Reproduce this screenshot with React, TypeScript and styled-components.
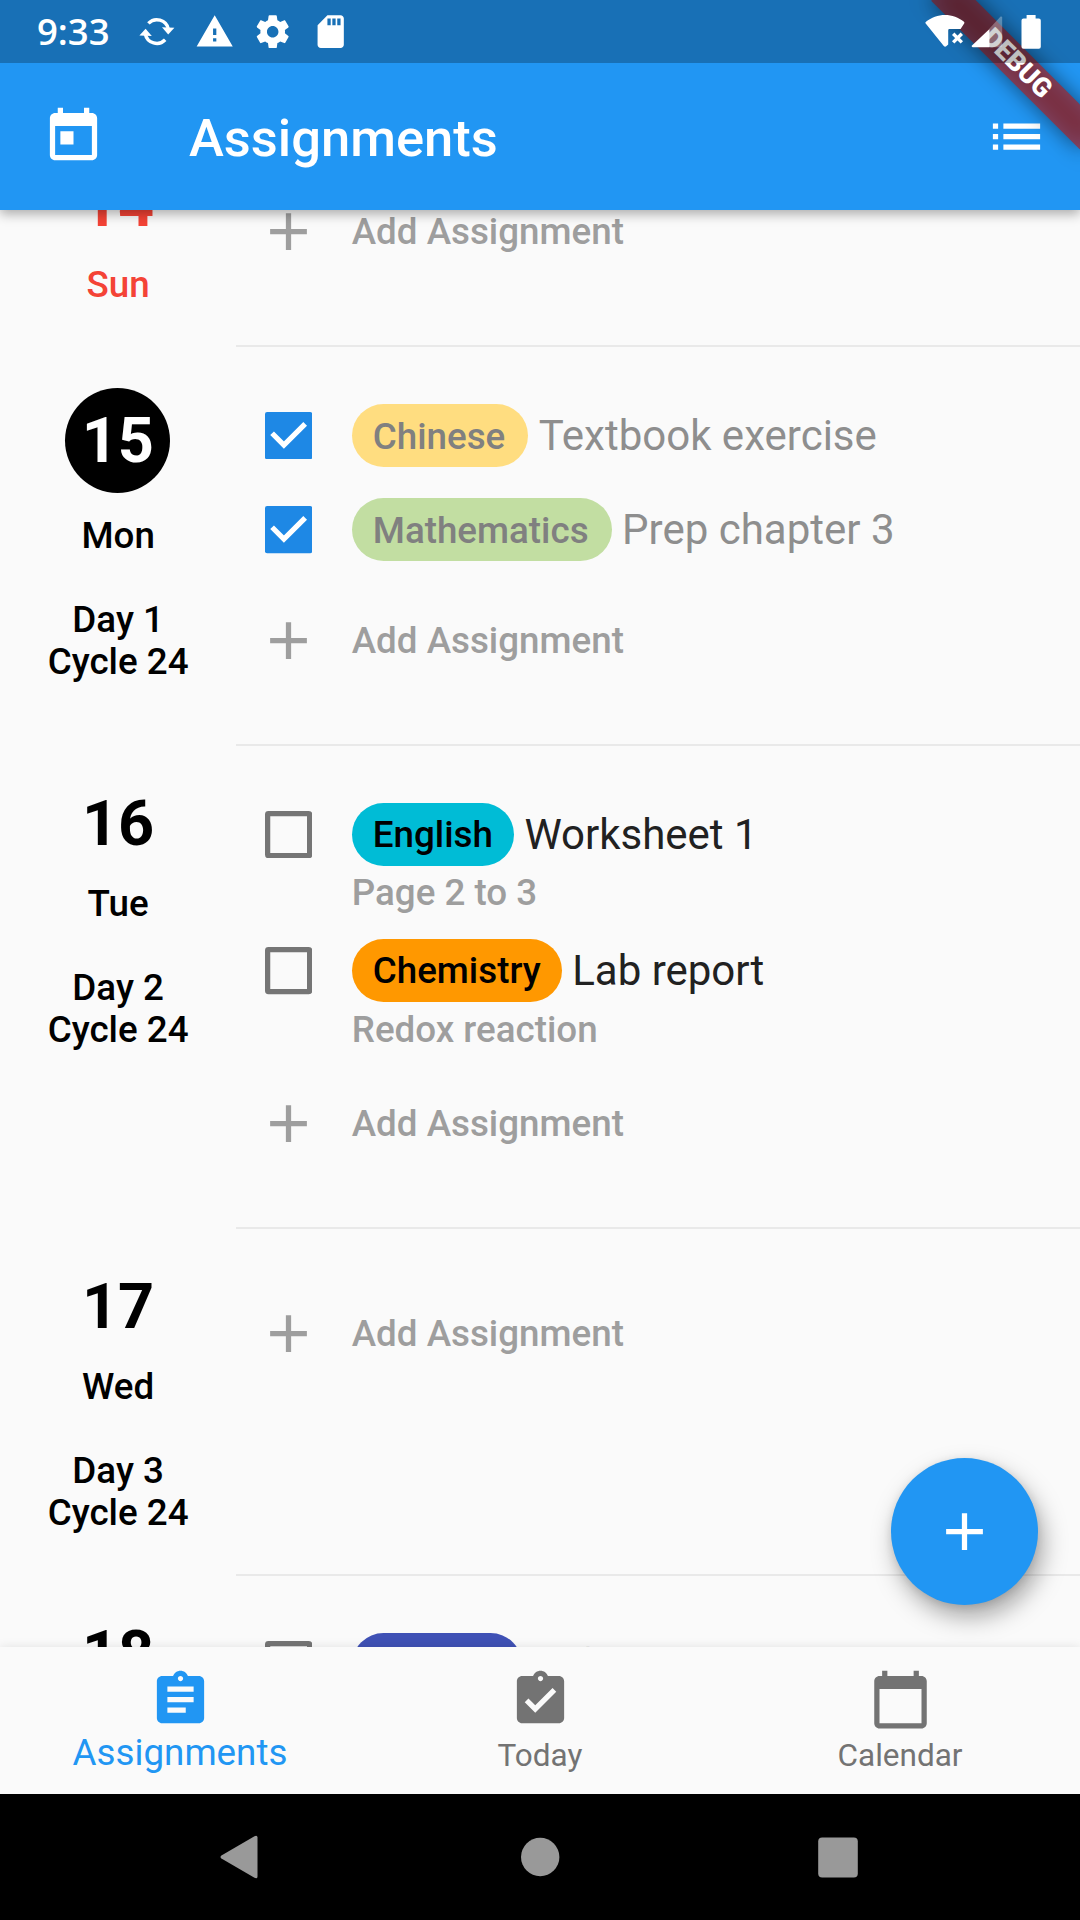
import React from "react";
import styled, { createGlobalStyle, css } from "styled-components";

const GlobalStyle = createGlobalStyle`
  body {
    margin: 0;
    background: #fafafa;
  }
  *, *::before, *::after {
    box-sizing: border-box;
  }
`;

const Screen = styled.div`
  position: relative;
  display: flex;
  flex-direction: column;
  width: 1080px;
  height: 1920px;
  overflow: hidden;
  background: #fafafa;
  font-family: Roboto, "Noto Sans", sans-serif;
`;

/* ---------- status bar ---------- */

const StatusBar = styled.header`
  position: relative;
  z-index: 4;
  display: flex;
  flex: none;
  align-items: center;
  height: 63px;
  padding: 0 39px 0 37px;
  color: #fff;
  background: rgba(0, 0, 0, 0.25);
`;

const Clock = styled.span`
  width: 100px;
  margin-bottom: 2px;
  font-family: "Open Sans", Roboto, sans-serif;
  font-size: 36.5px;
  font-weight: 600;
  line-height: 60px;
`;

const StatusIcons = styled.div`
  display: flex;
  align-items: center;
  gap: 18.6px;
`;

const SystemIcons = styled.div`
  display: flex;
  align-items: center;
  gap: 6px;
  margin-left: auto;

  & > :last-child {
    margin-left: 12.5px;
  }
`;

/* ---------- app bar ---------- */

const Chrome = styled.div`
  position: relative;
  z-index: 3;
  flex: none;
  overflow: visible;
  background: #2196f3;
  box-shadow: 0 4px 11px rgba(0, 0, 0, 0.32);
`;

const AppBar = styled.div`
  display: flex;
  align-items: center;
  height: 147px;
  padding: 0 32px 0 42px;
  color: #fff;
`;

const AppTitle = styled.h1`
  flex: 1;
  margin: 2px 0 0 84px;
  font-size: 52.5px;
  font-weight: 500;
  line-height: 62px;
`;

const DebugCorner = styled.div`
  position: absolute;
  z-index: 3;
  top: 0;
  right: 0;
  width: 200px;
  height: 200px;
  overflow: hidden;
  pointer-events: none;
`;

const ribbonPlace = css`
  position: absolute;
  top: 73.5px;
  left: 95px;
  width: 210px;
  height: 31.5px;
  transform: rotate(45deg);
  transform-origin: 105px -73.5px;
`;

const RibbonShade = styled.div`
  ${ribbonPlace}
  background: rgba(0, 0, 0, 0.5);
  filter: blur(10.4px);
`;

const Ribbon = styled.div`
  ${ribbonPlace}
  color: #fff;
  background: rgba(183, 28, 28, 0.627);
  font-size: 26.8px;
  font-weight: 900;
  line-height: 31.5px;
  text-align: center;
`;

/* ---------- day list ---------- */

const Viewport = styled.main`
  flex: 1;
  min-height: 0;
  overflow: hidden;
`;

const DayList = styled.div`
  display: flex;
  flex-direction: column;
  margin-top: -83.9px;
`;

const Day = styled.section`
  display: flex;
  flex: none;

  &:first-child {
    height: 220.1px;
  }

  &:last-child {
    margin-top: 0.4px;
  }
`;

const DateColumn = styled.div<{ $tone: string }>`
  display: flex;
  flex: none;
  flex-direction: column;
  align-items: center;
  gap: 21px;
  width: 236.25px;
  padding: 42px 0;
  color: ${(p) => p.$tone};
`;

const DateNumber = styled.div<{ $today?: boolean }>`
  font-size: 63px;
  font-weight: 700;
  line-height: 73.5px;
  ${(p) =>
    p.$today &&
    css`
      width: 105px;
      height: 105px;
      margin-right: 0.5px;
      line-height: 105px;
      text-align: center;
      color: #fff;
      background: #000;
      border-radius: 50%;
    `}
`;

const DateCaption = styled.div`
  margin: 1px 0 -1px;
  font-size: 36.75px;
  font-weight: 500;
  line-height: 42px;
  text-align: center;
  white-space: pre-line;
`;

const DayContent = styled.div`
  flex: 1;
  margin-bottom: -1px;
  padding: 42px 0 41px;
  border-bottom: 2px solid #e9e9e9;
`;

const Row = styled.div`
  display: flex;
  align-items: flex-start;
`;

const TaskRow = styled(Row)`
  padding: 15.75px 0;
`;

const Leading = styled.div`
  display: flex;
  flex: none;
  align-items: center;
  justify-content: center;
  width: 105px;
  height: 63px;
  margin-right: 10.5px;
`;

const Headline = styled.div`
  display: flex;
  align-items: center;
  gap: 10.5px;
  height: 63px;
`;

const Chip = styled.span<{ $fill: string; $done?: boolean }>`
  height: 63px;
  padding: 0 ${(p) => (p.$done ? "23px" : "21px")} 0 21px;
  border-radius: 31.5px;
  font-size: 36.75px;
  font-weight: 500;
  line-height: ${(p) => (p.$done ? "66px" : "64px")};
  color: ${(p) => (p.$done ? "#808080" : "#000")};
  background: ${(p) => p.$fill};
`;

const TaskTitle = styled.span<{ $done?: boolean }>`
  font-size: 42px;
  line-height: 63px;
  white-space: nowrap;
  color: ${(p) => (p.$done ? "#8e8e8e" : "#212121")};
`;

const Note = styled.div`
  margin: 6.25px 0 -6.25px;
  font-size: 36.75px;
  font-weight: 500;
  line-height: 42px;
  color: #9e9e9e;
`;

const AddRow = styled(Row)`
  align-items: center;
  height: 126px;
  font-size: 36.75px;
  font-weight: 500;
  color: #9e9e9e;
`;

/* ---------- floating button and bottom bars ---------- */

const Fab = styled.button`
  position: absolute;
  z-index: 1;
  right: 42px;
  bottom: 315px;
  display: flex;
  align-items: center;
  justify-content: center;
  width: 147px;
  height: 147px;
  padding: 0;
  border: 0;
  border-radius: 50%;
  color: #fff;
  background: #2196f3;
  box-shadow: 5px 12px 24px rgba(0, 0, 0, 0.34), 0 2px 8px rgba(0, 0, 0, 0.1);
`;

const BottomNav = styled.nav`
  position: relative;
  z-index: 2;
  display: grid;
  flex: none;
  grid-template-columns: repeat(3, 1fr);
  height: 147px;
  background: #fafafa;
  box-shadow: 0 0 10px rgba(0, 0, 0, 0.1);
`;

const NavItem = styled.div<{ $active?: boolean }>`
  display: flex;
  flex-direction: column;
  align-items: center;
  padding-top: 21px;
  font-size: ${(p) => (p.$active ? "36.75px" : "31.5px")};
  line-height: ${(p) => (p.$active ? "44px" : "49px")};
  color: ${(p) => (p.$active ? "#2196f3" : "#737373")};
`;

const SystemNav = styled.footer`
  position: relative;
  z-index: 2;
  display: grid;
  flex: none;
  grid-template-columns: repeat(3, 300px);
  align-items: center;
  justify-content: center;
  justify-items: center;
  height: 126px;
  background: #000;
`;

/* ---------- icons ---------- */

const Glyph = ({ d, size = 63 }: { d: string; size?: number }) => (
  <svg width={size} height={size} viewBox="0 0 24 24" fill="currentColor" fillRule="evenodd">
    <path d={d} />
  </svg>
);

const paths = {
  today:
    "M19 3h-1V1h-2v2H8V1H6v2H5c-1.11 0-1.99.9-1.99 2L3 19c0 1.1.89 2 2 2h14c1.1 0 2-.9 2-2V5c0-1.1-.9-2-2-2zm0 16H5V8h14v11zM7 10h5v5H7z",
  list: "M3 13h2v-2H3v2zm0 4h2v-2H3v2zm0-8h2V7H3v2zm4 4h14v-2H7v2zm0 4h14v-2H7v2zM7 7v2h14V7H7z",
  add: "M19 13h-6v6h-2v-6H5v-2h6V5h2v6h6v2z",
  assignment:
    "M19 3h-4.18C14.4 1.84 13.3 1 12 1c-1.3 0-2.4.84-2.82 2H5c-1.1 0-2 .9-2 2v14c0 1.1.9 2 2 2h14c1.1 0 2-.9 2-2V5c0-1.1-.9-2-2-2zm-7 0c.55 0 1 .45 1 1s-.45 1-1 1-1-.45-1-1 .45-1 1-1zm2 14H7v-2h7v2zm3-4H7v-2h10v2zm0-4H7V7h10v2z",
  turnedIn:
    "M19 3h-4.18C14.4 1.84 13.3 1 12 1c-1.3 0-2.4.84-2.82 2H5c-1.1 0-2 .9-2 2v14c0 1.1.9 2 2 2h14c1.1 0 2-.9 2-2V5c0-1.1-.9-2-2-2zm-7 0c.55 0 1 .45 1 1s-.45 1-1 1-1-.45-1-1 .45-1 1-1zm-2 14l-4-4 1.41-1.41L10 14.17l6.59-6.59L18 9l-8 8z",
  calendar:
    "M20 3h-1V1h-2v2H7V1H5v2H4c-1.1 0-2 .9-2 2v16c0 1.1.9 2 2 2h16c1.1 0 2-.9 2-2V5c0-1.1-.9-2-2-2zm0 18H4V8h16v13z",
  warning: "M1 21h22L12 2 1 21zm12-3h-2v-2h2v2zm0-4h-2v-4h2v4z",
  settings:
    "M19.43 12.98c.04-.32.07-.64.07-.98s-.03-.66-.07-.98l2.11-1.65c.19-.15.24-.42.12-.64l-2-3.46c-.12-.22-.39-.3-.61-.22l-2.49 1c-.52-.4-1.08-.73-1.69-.98l-.38-2.65C14.46 2.18 14.25 2 14 2h-4c-.25 0-.46.18-.49.42l-.38 2.65c-.61.25-1.17.59-1.69.98l-2.49-1c-.23-.09-.49 0-.61.22l-2 3.46c-.13.22-.07.49.12.64l2.11 1.65c-.04.32-.07.65-.07.98s.03.66.07.98l-2.11 1.65c-.19.15-.24.42-.12.64l2 3.46c.12.22.39.3.61.22l2.49-1c.52.4 1.08.73 1.69.98l.38 2.65c.03.24.24.42.49.42h4c.25 0 .46-.18.49-.42l.38-2.65c.61-.25 1.17-.59 1.69-.98l2.49 1c.23.09.49 0 .61-.22l2-3.46c.12-.22.07-.49-.12-.64l-2.11-1.65zM12 15.5c-1.93 0-3.5-1.57-3.5-3.5s1.57-3.5 3.5-3.5 3.5 1.57 3.5 3.5-1.57 3.5-3.5 3.5z",
  sdCard:
    "M18 2h-8L4.02 8 4 20c0 1.1.9 2 2 2h12c1.1 0 2-.9 2-2V4c0-1.1-.9-2-2-2zm-6 6h-2V4h2v4zm3 0h-2V4h2v4zm3 0h-2V4h2v4z",
};

const SyncIcon = () => (
  <svg width="39.4" height="39.4" viewBox="0 0 39.4 39.4" fill="none">
    <path d="M11.4 11.4A11.7 11.7 0 0 1 31.3 17" stroke="#fff" strokeWidth="3.4" />
    <path d="M28.2 27.8A11.7 11.7 0 0 1 8.3 22.2" stroke="#fff" strokeWidth="3.4" />
    <path d="M25 15.2L37.4 15.8L31.2 22.4z" fill="#fff" />
    <path d="M14.8 24L2.4 23.4L8.6 16.8z" fill="#fff" />
  </svg>
);

const WifiOffIcon = () => (
  <svg width="40" height="36" viewBox="0 0 40 36" fill="#fff">
    <path d="M0.9 9.8Q-.2 8.6 1 7.8C11.5-1.4 28.5-1.4 39 7.8Q39.8 8.6 39 9.8L35.6 15H24.4Q23.2 15 23.2 16.4V30.4L21.2 32.3Q20 33.2 18.8 32z" />
    <path d="M28.2 19.8l8.6 8.6M36.8 19.8l-8.6 8.6" stroke="#fff" strokeWidth="3.4" />
  </svg>
);

const SignalIcon = () => (
  <svg width="32" height="32" viewBox="0 0 32 32" fill="#fff">
    <path d="M18.5 13V31.3H1.8Q0 31 1 29.6z" />
    <path d="M18.5 12.5L29.6.6Q31 0 31.2 1.6V29.5Q31.2 31.3 29.4 31.3H18.5z" opacity=".3" />
  </svg>
);

const BatteryIcon = () => (
  <svg width="20" height="34" viewBox="0 0 20 34" fill="#fff">
    <path d="M5.6 0h9v3.4h3.2q2 0 2 2V31.8q0 2-2 2H2.5q-2 0-2-2V5.4q0-2 2-2h3.1z" />
  </svg>
);

const CheckboxIcon = ({ checked }: { checked?: boolean }) => (
  <svg width="47.25" height="47.25" viewBox="0 0 18 18" fill="none">
    {checked ? (
      <>
        <rect width="18" height="18" rx=".8" fill="#1e88e5" />
        <path d="M2.7 8.1L7.2 12.6L15.3 4.5" stroke="#fff" strokeWidth="2" />
      </>
    ) : (
      <rect x="1" y="1" width="16" height="16" rx=".3" stroke="#757575" strokeWidth="2" />
    )}
  </svg>
);

/* ---------- data ---------- */

type Task = { subject: string; fill: string; title: string; note?: string; done?: boolean };
type DayEntry = {
  date: number;
  caption?: string;
  tone?: string;
  today?: boolean;
  loading?: boolean;
  tasks: Task[];
};

const days: DayEntry[] = [
  { date: 14, caption: "Sun", tone: "#f44336", tasks: [] },
  {
    date: 15,
    caption: "Mon\n\nDay 1\nCycle 24",
    today: true,
    tasks: [
      { subject: "Chinese", fill: "#ffdd80", title: "Textbook exercise", done: true },
      { subject: "Mathematics", fill: "#c2dea2", title: "Prep chapter 3", done: true },
    ],
  },
  {
    date: 16,
    caption: "Tue\n\nDay 2\nCycle 24",
    tasks: [
      { subject: "English", fill: "#00bcd6", title: "Worksheet 1", note: "Page 2 to 3" },
      { subject: "Chemistry", fill: "#ff9800", title: "Lab report", note: "Redox reaction" },
    ],
  },
  { date: 17, caption: "Wed\n\nDay 3\nCycle 24", tasks: [] },
  {
    date: 18,
    loading: true,
    tasks: [{ subject: "Physics", fill: "#3f51b5", title: "Calc" }],
  },
];

const TaskItem = ({ subject, fill, title, note, done }: Task) => (
  <TaskRow>
    <Leading>
      <CheckboxIcon checked={done} />
    </Leading>
    <div>
      <Headline>
        <Chip $fill={fill} $done={done}>
          {subject}
        </Chip>
        <TaskTitle $done={done}>{title}</TaskTitle>
      </Headline>
      {note && <Note>{note}</Note>}
    </div>
  </TaskRow>
);

export default function App() {
  return (
    <>
      <GlobalStyle />
      <Screen>
        <Chrome>
          <StatusBar>
            <Clock>9:33</Clock>
            <StatusIcons>
              <SyncIcon />
              <Glyph d={paths.warning} size={39.4} />
              <Glyph d={paths.settings} size={39.4} />
              <Glyph d={paths.sdCard} size={39.4} />
            </StatusIcons>
            <SystemIcons>
              <WifiOffIcon />
              <SignalIcon />
              <BatteryIcon />
            </SystemIcons>
          </StatusBar>
          <AppBar>
            <Glyph d={paths.today} />
            <AppTitle>Assignments</AppTitle>
            <Glyph d={paths.list} />
          </AppBar>
          <DebugCorner>
            <RibbonShade />
            <Ribbon>DEBUG</Ribbon>
          </DebugCorner>
        </Chrome>

        <Viewport>
          <DayList>
            {days.map((day) => (
              <Day key={day.date}>
                <DateColumn $tone={day.tone ?? "#000"}>
                  <DateNumber $today={day.today}>{day.date}</DateNumber>
                  {day.caption && <DateCaption>{day.caption}</DateCaption>}
                </DateColumn>
                <DayContent>
                  {day.tasks.map((task) => (
                    <TaskItem key={task.subject} {...task} />
                  ))}
                  {!day.loading && (
                    <AddRow>
                      <Leading>
                        <Glyph d={paths.add} />
                      </Leading>
                      Add Assignment
                    </AddRow>
                  )}
                </DayContent>
              </Day>
            ))}
          </DayList>
        </Viewport>

        <Fab aria-label="Add">
          <Glyph d={paths.add} />
        </Fab>

        <BottomNav>
          <NavItem $active>
            <Glyph d={paths.assignment} />
            Assignments
          </NavItem>
          <NavItem>
            <Glyph d={paths.turnedIn} />
            Today
          </NavItem>
          <NavItem>
            <Glyph d={paths.calendar} />
            Calendar
          </NavItem>
        </BottomNav>

        <SystemNav>
          <svg width="41" height="44" viewBox="0 0 41 44" fill="#999">
            <path d="M34.5 1.2Q37.4-.2 37.5 2.6V41.4Q37.4 44.2 34.5 42.8L1.4 23.4Q-.4 22 1.4 20.6z" />
          </svg>
          <svg width="40" height="40" viewBox="0 0 40 40" fill="#999">
            <circle cx="20.2" cy="20" r="19.2" />
          </svg>
          <svg width="44" height="41" viewBox="0 0 44 41" fill="#999">
            <rect x=".2" y=".6" width="39.6" height="40" rx="4" />
          </svg>
        </SystemNav>
      </Screen>
    </>
  );
}
